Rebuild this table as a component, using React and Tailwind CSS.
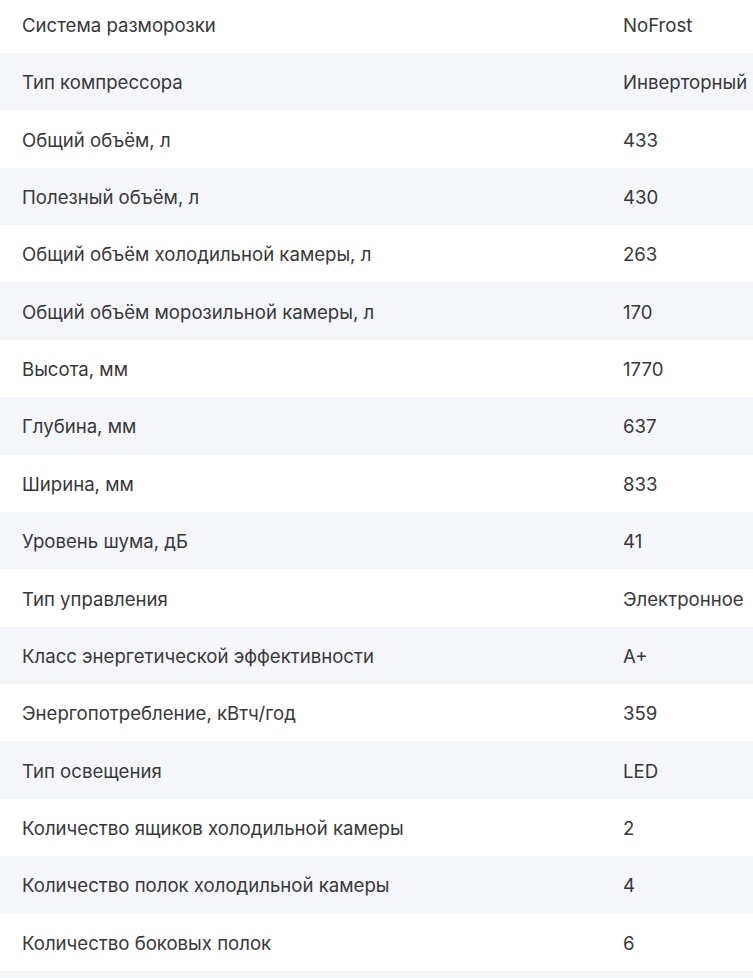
import React from 'react';

const specs = [
  ['Система разморозки', 'NoFrost'],
  ['Тип компрессора', 'Инверторный'],
  ['Общий объём, л', '433'],
  ['Полезный объём, л', '430'],
  ['Общий объём холодильной камеры, л', '263'],
  ['Общий объём морозильной камеры, л', '170'],
  ['Высота, мм', '1770'],
  ['Глубина, мм', '637'],
  ['Ширина, мм', '833'],
  ['Уровень шума, дБ', '41'],
  ['Тип управления', 'Электронное'],
  ['Класс энергетической эффективности', 'A+'],
  ['Энергопотребление, кВтч/год', '359'],
  ['Тип освещения', 'LED'],
  ['Количество ящиков холодильной камеры', '2'],
  ['Количество полок холодильной камеры', '4'],
  ['Количество боковых полок', '6'],
  ['', ''],
];

export default function App() {
  return (
    <div className="h-[978px] w-[753px] overflow-hidden bg-white font-['Inter',sans-serif] text-[18.6px] text-[#383838]">
      <div className="-mt-[4.4px]">
        {specs.map(([label, value], i) => (
          <div
            key={i}
            className={`flex h-[57.375px] items-center whitespace-nowrap pl-[22px] pt-[3px] ${i % 2 === 1 ? 'bg-[#f5f6fa]' : 'bg-white'}`}
          >
            <div className="w-[601px] shrink-0">{label}</div>
            <div>{value}</div>
          </div>
        ))}
      </div>
    </div>
  );
}
